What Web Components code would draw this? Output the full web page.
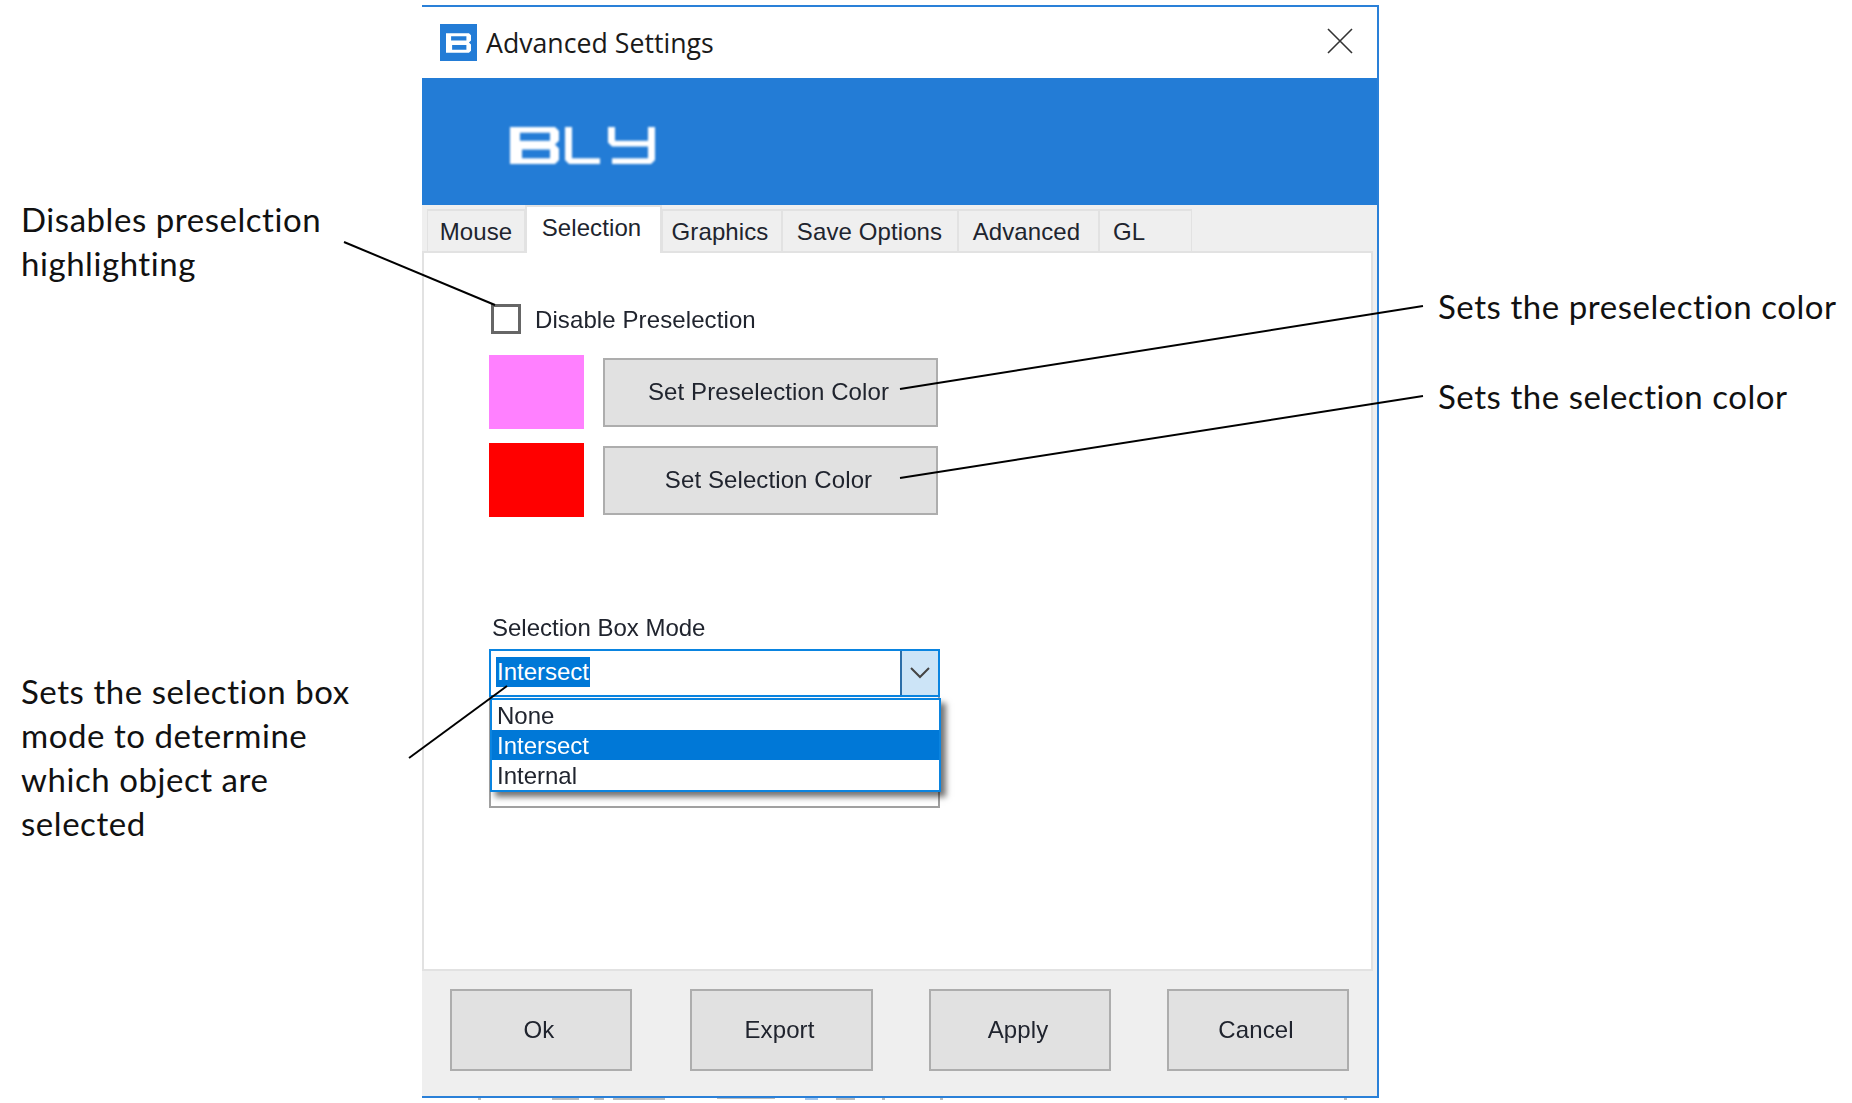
<!DOCTYPE html>
<html>
<head>
<meta charset="utf-8">
<title>Advanced Settings</title>
<style>
  html, body { margin: 0; background: #fff; }
</style>
</head>
<body>
<bly-page>
  <bly-notes slot="left" class="left">
    <bly-note style="margin-top:197px">Disables preselction<br>highlighting</bly-note>
    <bly-note style="margin-top:384px">Sets the selection box<br>mode to determine<br>which object are<br>selected</bly-note>
  </bly-notes>
  <bly-window slot="window" title-text="Advanced Settings">
    <bly-tabs>
      <bly-tab style="width:98px;padding-right:0">Mouse</bly-tab>
      <bly-tab active style="width:137px">Selection</bly-tab>
      <bly-tab style="width:120px">Graphics</bly-tab>
      <bly-tab style="width:176px;padding-right:1px">Save Options</bly-tab>
      <bly-tab style="width:141px">Advanced</bly-tab>
      <bly-tab style="width:93px;justify-content:flex-start;padding-left:13px">GL</bly-tab>
    </bly-tabs>
    <bly-selection-panel></bly-selection-panel>
    <bly-footer>
      <bly-button>Ok</bly-button>
      <bly-button style="margin-left:2px;--btn-width:183px">Export</bly-button>
      <bly-button>Apply</bly-button>
      <bly-button>Cancel</bly-button>
    </bly-footer>
  </bly-window>
  <bly-notes slot="right">
    <bly-note style="margin-top:284px">Sets the preselection color</bly-note>
    <bly-note style="margin-top:46px">Sets the selection color</bly-note>
  </bly-notes>
</bly-page>

<script>
const UI_FONT = '"Liberation Sans", Arial, sans-serif'
const B_PATH = 'M0 0H45L49 4V14L45 18L49 22V34L45 38H0ZM10 6V14H40V6ZM12 23V32H40V23Z'

// base class: each element only has to give its shadow markup
class ShadowElement extends HTMLElement {
  constructor() {
    super()
    this.attachShadow({ mode: 'open' })
  }
  connectedCallback() {
    this.shadowRoot.innerHTML = this.markup()
  }
}

class BlyPage extends ShadowElement {
  markup() {
    return `
      <style>
        :host { display: flex; position: relative; width: 1852px; height: 1103px; overflow: hidden; background: #fff; }
        .left { width: 422px; flex: none; }
        .right { flex: 1; padding-left: 38px; }
        .win { padding-top: 5px; flex: none; }
        svg { position: absolute; left: 0; top: 0; pointer-events: none; }
      </style>
      <div class="left"><slot name="left"></slot></div>
      <div class="win"><slot name="window"></slot></div>
      <div class="right"><slot name="right"></slot></div>
      <svg width="1852" height="1103" fill="none" stroke="#000" stroke-width="2">
        <path d="M344 242L495 305"/>
        <path d="M900 389L1423 306"/>
        <path d="M900 478L1423 396"/>
        <path d="M409 758L507 686"/>
        <g stroke="none" fill="#555" opacity=".4">
          <rect x="478" y="1098" width="3" height="2"/>
          <rect x="552" y="1098" width="27" height="2"/>
          <rect x="594" y="1098" width="10" height="2"/>
          <rect x="613" y="1098" width="52" height="2"/>
          <rect x="717" y="1098" width="58" height="1"/>
          <rect x="805" y="1098" width="13" height="2" fill="#1a6fd0"/>
          <rect x="836" y="1098" width="19" height="2"/>
          <rect x="882" y="1098" width="3" height="2"/>
          <rect x="940" y="1098" width="3" height="2"/>
          <rect x="1344" y="1098" width="3" height="2"/>
        </g>
      </svg>
    `
  }
}

class BlyNotes extends ShadowElement {
  markup() {
    return `
      <style>:host { display: block; padding-left: 21px; }</style>
      <slot></slot>
    `
  }
}

class BlyNote extends ShadowElement {
  markup() {
    return `
      <style>
        :host { display: block; font: 33px/44px Lato, "Open Sans", sans-serif; letter-spacing: .55px; color: #111; white-space: nowrap; }
      </style>
      <slot></slot>
    `
  }
}

class BlyWindow extends ShadowElement {
  markup() {
    return `
      <style>
        :host {
          display: flex; flex-direction: column; box-sizing: border-box;
          width: 957px; height: 1093px; background: #efefef;
          border: solid #2a80d8; border-width: 2px 2px 2px 0;
        }
        .title {
          display: flex; align-items: center; height: 71px; background: #fff;
          padding-left: 18px; font: 26.7px "Open Sans", sans-serif; color: #1a1a1a;
        }
        .icon { width: 37px; height: 37px; background: #237cd6; display: flex; align-items: center; justify-content: center; margin-right: 9px; }
        .close { margin: 0 24px 3px auto; }
        .banner { height: 127px; box-sizing: border-box; background: #237cd6; padding: 49px 0 0 88px; }
        .banner svg { display: block; }
        .body { flex: 1; display: flex; flex-direction: column; filter: blur(.55px); }
      </style>
      <div class="title">
        <div class="icon">
          <svg width="25" height="20" viewBox="0 0 49 38" style="filter:blur(.4px)"><path fill="#fff" fill-rule="evenodd" d="${B_PATH}"/></svg>
        </div>
        <span>${this.getAttribute('title-text')}</span>
        <svg class="close" width="26" height="26" viewBox="0 0 26 26" fill="none" stroke="#333" stroke-width="1.6"><path d="M1 1L25 25M25 1L1 25"/></svg>
      </div>
      <div class="banner">
        <svg width="146" height="37" viewBox="0 0 146 38" preserveAspectRatio="none" fill="#fff" style="filter:blur(1px)">
          <path fill-rule="evenodd" d="${B_PATH}"/>
          <path d="M55 0H62V32H90V38H59L55 34Z"/>
          <path d="M98 0H105V14H138V0H145V34L141 38H102V32H138V20H102L98 16Z"/>
        </svg>
      </div>
      <div class="body"><slot></slot></div>
    `
  }
}

class BlyTabs extends ShadowElement {
  markup() {
    return `
      <style>
        :host { display: flex; align-items: flex-end; height: 48px; padding-left: 5px; position: relative; z-index: 1; margin-bottom: -2px; }
      </style>
      <slot></slot>
    `
  }
}

class BlyTab extends ShadowElement {
  markup() {
    const active = this.hasAttribute('active')
    return `
      <style>
        :host {
          display: flex; justify-content: center; box-sizing: border-box; flex: none;
          height: ${active ? 48 : 44}px; padding: 5px 4px 0 0;
          background: ${active ? '#fff' : '#efefef'};
          border: 2px solid #e2e2e2; border-left-width: ${active ? 2 : 1}px; border-right-width: ${active ? 2 : 1}px;
          ${active ? 'border-bottom: none;' : ''}
          font: 24px/32px ${UI_FONT}; letter-spacing: .1px; color: #20242e;
        }
      </style>
      <slot></slot>
    `
  }
}

class BlySelectionPanel extends ShadowElement {
  markup() {
    return `
      <style>
        :host {
          display: block; box-sizing: border-box; height: 720px; background: #fff;
          border: 2px solid #e2e2e2; margin-right: 4px;
          padding: 51px 0 0 65px; font: 24px/30px ${UI_FONT}; color: #20242e;
        }
        .check { display: flex; align-items: center; gap: 14px; height: 30px; padding-left: 2px; letter-spacing: .1px; }
        .check span { position: relative; top: 1px; }
        .box { width: 30px; height: 30px; box-sizing: border-box; border: 3px solid #666; background: #fff; }
        .row { display: flex; align-items: center; gap: 19px; height: 74px; }
        .row.first { margin-top: 21px; }
        .row.second { margin-top: 14px; }
        .swatch { width: 95px; height: 74px; }
        bly-button { --btn-width: 335px; --btn-height: 69px; }
        .mode { margin: 96px 0 6px 3px; }
      </style>
      <div class="check"><div class="box"></div><span>Disable Preselection</span></div>
      <div class="row first"><div class="swatch" style="background:#ff80ff"></div><bly-button>Set Preselection Color</bly-button></div>
      <div class="row second"><div class="swatch" style="background:#ff0000"></div><bly-button>Set Selection Color</bly-button></div>
      <div class="mode">Selection Box Mode</div>
      <bly-combo></bly-combo>
    `
  }
}

class BlyCombo extends ShadowElement {
  markup() {
    return `
      <style>
        :host { display: block; position: relative; width: 451px; font: 24px/30px ${UI_FONT}; color: #20242e; }
        .field {
          display: flex; justify-content: space-between; box-sizing: border-box; height: 48px;
          border: 2px solid #0a84e0; background: #fff;
        }
        .value { margin: 6px 0 0 5px; height: 30px; padding: 0 1px; background: #0078d7; color: #fff; }
        .arrow {
          width: 38px; box-sizing: border-box; background: #cce4f7; border-left: 2px solid #2c6ea8;
          display: flex; align-items: center; justify-content: center;
        }
        .under { height: 111px; box-sizing: border-box; border: 2px solid #a0a0a0; border-top: none; background: #fff; }
        .list {
          position: absolute; left: 1px; top: 49px; width: 451px; box-sizing: border-box;
          border: 2px solid #0a84e0; background: #fff; box-shadow: 5px 5px 6px rgba(0,0,0,.55);
        }
        .list div { height: 30px; padding-left: 5px; line-height: 31px; }
        .list .sel { background: #0078d7; color: #fff; }
      </style>
      <div class="field">
        <span class="value">Intersect</span>
        <span class="arrow">
          <svg width="20" height="12" viewBox="0 0 20 12" fill="none" stroke="#444" stroke-width="2"><path d="M1 1L10 10L19 1"/></svg>
        </span>
      </div>
      <div class="under"></div>
      <div class="list">
        <div>None</div>
        <div class="sel">Intersect</div>
        <div>Internal</div>
      </div>
    `
  }
}

class BlyFooter extends ShadowElement {
  markup() {
    return `
      <style>
        :host { display: flex; gap: 56px; padding: 18px 0 0 28px; }
      </style>
      <slot></slot>
    `
  }
}

class BlyButton extends ShadowElement {
  markup() {
    return `
      <style>
        :host {
          display: flex; align-items: center; justify-content: center; box-sizing: border-box; flex: none;
          width: var(--btn-width, 182px); height: var(--btn-height, 82px); padding: 0 4px 0 0;
          background: #e1e1e1; border: 2px solid #adadad;
          font: 24px ${UI_FONT}; letter-spacing: .1px; color: #20242e;
        }
      </style>
      <slot></slot>
    `
  }
}

customElements.define('bly-page', BlyPage)
customElements.define('bly-notes', BlyNotes)
customElements.define('bly-note', BlyNote)
customElements.define('bly-window', BlyWindow)
customElements.define('bly-tabs', BlyTabs)
customElements.define('bly-tab', BlyTab)
customElements.define('bly-selection-panel', BlySelectionPanel)
customElements.define('bly-combo', BlyCombo)
customElements.define('bly-footer', BlyFooter)
customElements.define('bly-button', BlyButton)
</script>
</body>
</html>
